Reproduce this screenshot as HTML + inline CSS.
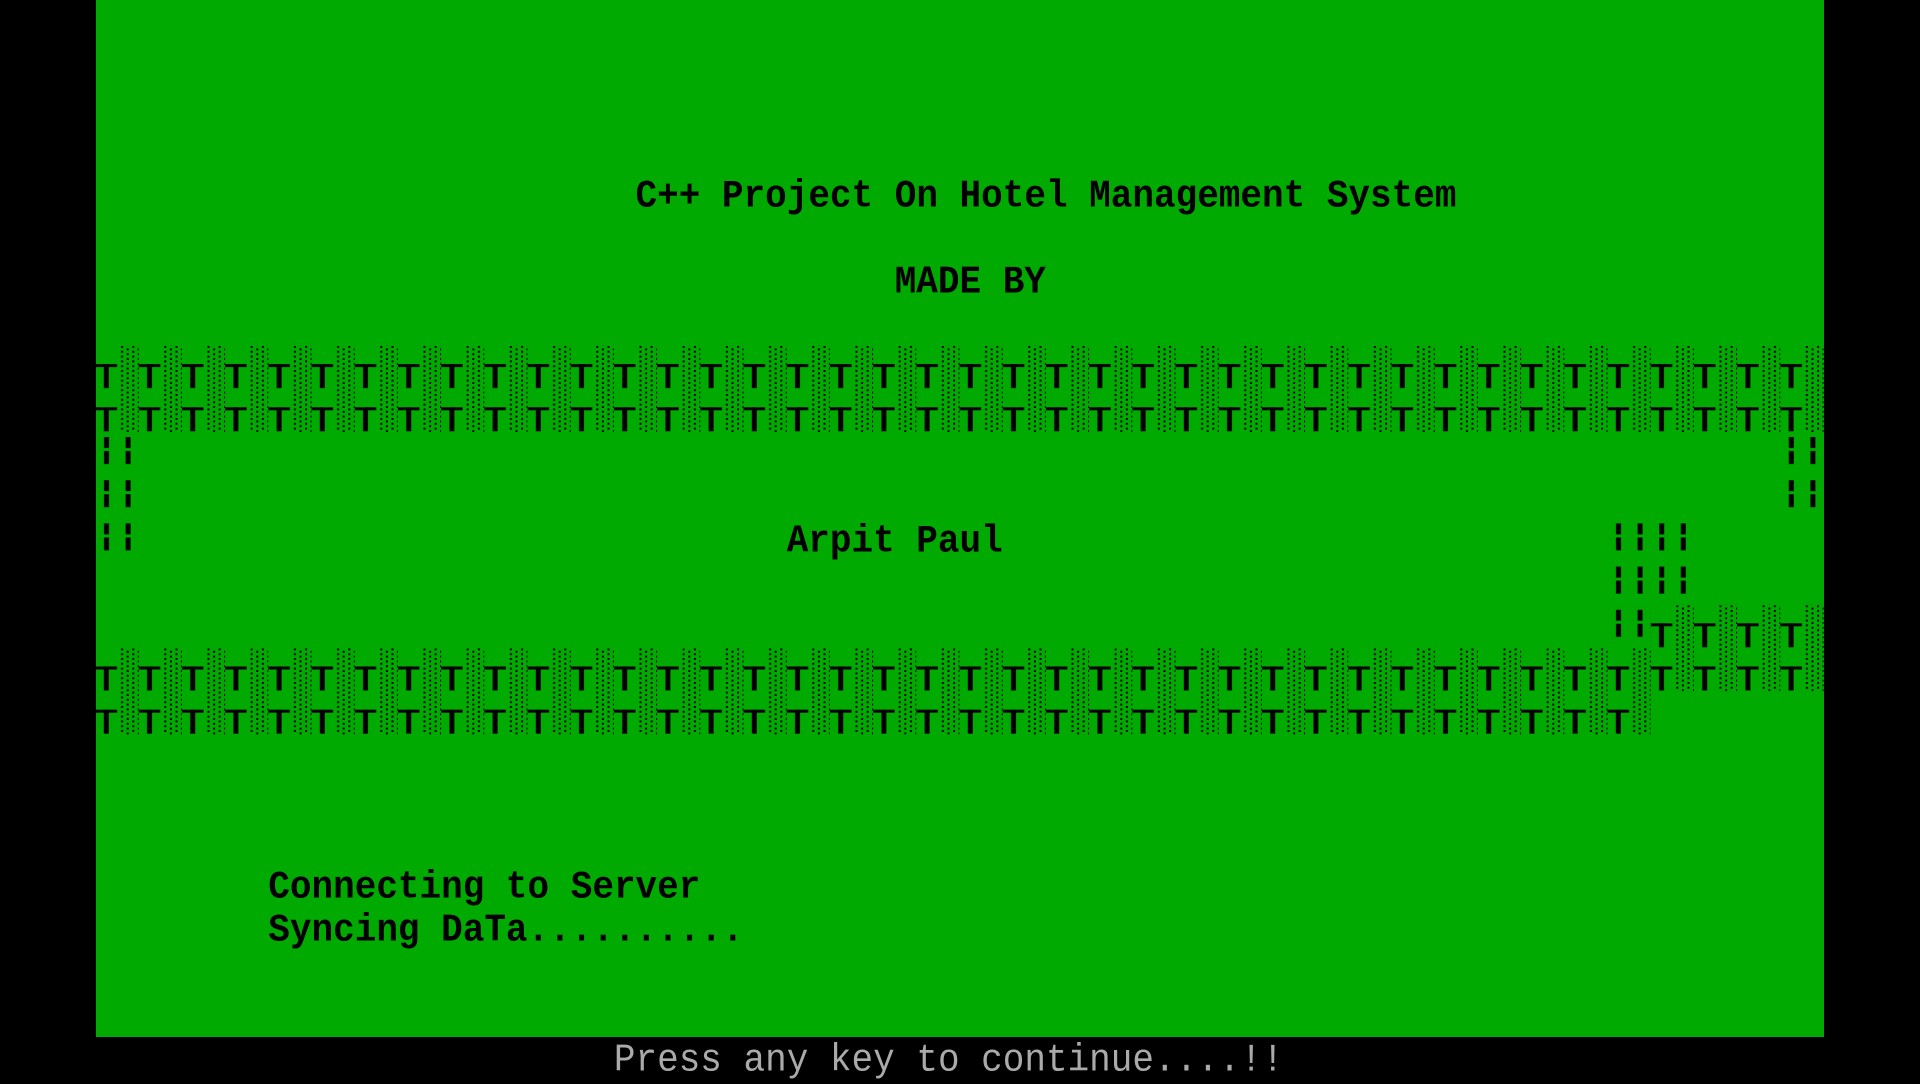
<!DOCTYPE html>
<html><head><meta charset="utf-8"><style>
html,body{margin:0;padding:0;background:#000;width:1920px;height:1080px;overflow:hidden}
.g{position:absolute;left:95.5px;top:0;width:1728px;height:1036.8px;background:#00aa00}
.t{position:absolute;font-family:"Liberation Mono",monospace;font-size:36px;line-height:43.2px;height:43.2px;white-space:pre;color:#000;font-weight:bold;letter-spacing:0;margin-top:3px;transform:scaleY(1.08);transform-origin:0 80%}
svg{position:absolute;left:0;top:0}
</style></head><body>
<div class="g"></div>
<svg width="1920" height="1080">
<defs>
<pattern id="T" patternUnits="userSpaceOnUse" x="95.5" y="0" width="43.2" height="43.2">
<rect x="0" y="18.5" width="21.6" height="3" fill="#000"/>
<rect x="8.3" y="18.5" width="5" height="24" fill="#000"/>
</pattern>
<pattern id="S" patternUnits="userSpaceOnUse" x="95.5" y="0" width="43.2" height="4.8">
<rect x="25.6" y="0.4" width="2" height="2" fill="#000"/>
<rect x="31.2" y="2.8" width="2" height="2" fill="#000"/>
<rect x="36.8" y="0.4" width="2" height="2" fill="#000"/>
<rect x="42.2" y="2.8" width="1" height="2" fill="#000"/>
</pattern>
<pattern id="B" patternUnits="userSpaceOnUse" x="95.5" y="0" width="21.6" height="43.2">
<rect x="8.5" y="5" width="5" height="11" fill="#000"/>
<rect x="8.5" y="19" width="5" height="13" fill="#000"/>
</pattern>
</defs>
<rect x="95.5" y="345.6" width="1728" height="86.4" fill="url(#T)"/>
<rect x="95.5" y="345.6" width="1728" height="86.4" fill="url(#S)"/>
<rect x="1650.7" y="604.8" width="172.8" height="43.2" fill="url(#T)"/>
<rect x="1650.7" y="604.8" width="172.8" height="43.2" fill="url(#S)"/>
<rect x="95.5" y="648" width="1728" height="43.2" fill="url(#T)"/>
<rect x="95.5" y="648" width="1728" height="43.2" fill="url(#S)"/>
<rect x="95.5" y="691.2" width="1555.2" height="43.2" fill="url(#T)"/>
<rect x="95.5" y="691.2" width="1555.2" height="43.2" fill="url(#S)"/>
<rect x="95.5" y="432" width="43.2" height="129.6" fill="url(#B)"/>
<rect x="1780.3" y="432" width="43.2" height="86.4" fill="url(#B)"/>
<rect x="1607.5" y="518.4" width="86.4" height="86.4" fill="url(#B)"/>
<rect x="1607.5" y="604.8" width="43.2" height="43.2" fill="url(#B)"/>
</svg>
<div class="t" style="left:635.5px;top:172.8px">C++ Project On Hotel Management System</div>
<div class="t" style="left:894.7px;top:259.2px">MADE BY</div>
<div class="t" style="left:786.7px;top:518.4px">Arpit Paul</div>
<div class="t" style="left:268.3px;top:864px">Connecting to Server</div>
<div class="t" style="left:268.3px;top:907.2px">Syncing DaTa..........</div>
<div class="t" style="left:613.9px;top:1036.8px;color:#aaa;font-weight:normal">Press any key to continue....!!</div>
</body></html>
